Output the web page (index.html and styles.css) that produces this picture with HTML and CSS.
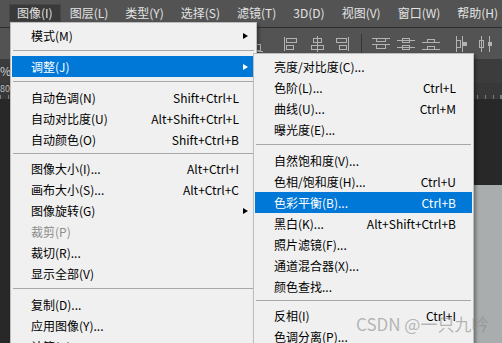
FILE: index.html
```html
<!DOCTYPE html>
<html>
    <head>
        <meta charset="utf-8" />
        <title>图像 - 调整</title>
        <link rel="stylesheet" href="styles.css">
    </head>
    <body>
        <div class="app">
            <ul class="menubar">
                <li class="mb-item active">图像(I)</li>
                <li class="mb-item">图层(L)</li>
                <li class="mb-item">类型(Y)</li>
                <li class="mb-item">选择(S)</li>
                <li class="mb-item">滤镜(T)</li>
                <li class="mb-item">3D(D)</li>
                <li class="mb-item">视图(V)</li>
                <li class="mb-item">窗口(W)</li>
                <li class="mb-item">帮助(H)</li>
            </ul>

            <!-- options bar: align / distribute buttons -->
            <div class="optbar">
                <svg class="ico" viewBox="0 0 16 16"><path d="M0 15.5H16"/><rect x="2.5" y="4.5" width="4" height="10"/><rect x="9.5" y="8.5" width="4" height="6"/></svg>
                <svg class="ico" viewBox="0 0 16 16"><path d="M1.5 1V15"/><rect x="3.5" y="2.5" width="10" height="4"/><rect x="3.5" y="9.5" width="7" height="4"/></svg>
                <svg class="ico" viewBox="0 0 16 16"><path d="M8.5 0V16"/><rect x="4.5" y="2.5" width="8" height="4"/><rect x="2.5" y="9.5" width="12" height="4"/></svg>
                <svg class="ico" viewBox="0 0 16 16"><path d="M14.5 1V15"/><rect x="2.5" y="2.5" width="10" height="4"/><rect x="5.5" y="9.5" width="7" height="4"/></svg>
                <span class="opt-sep"></span>
                <svg class="ico wide" viewBox="0 0 18 16"><path d="M0 2.5H18M0 8.5H18"/><rect x="4.5" y="2.5" width="9" height="3"/><rect x="4.5" y="8.5" width="9" height="4"/></svg>
                <svg class="ico wide" viewBox="0 0 18 16"><path d="M0 4.5H18M0 11.5H18"/><rect x="5.5" y="2.5" width="7" height="4"/><rect x="5.5" y="9.5" width="7" height="4"/></svg>
                <svg class="ico wide" viewBox="0 0 18 16"><path d="M0 6.5H18M0 13.5H18"/><rect x="5.5" y="3.5" width="7" height="3"/><rect x="5.5" y="10.5" width="7" height="3"/></svg>
                <svg class="ico" viewBox="0 0 16 16"><path d="M1.5 0V16M7.5 0V16"/><rect x="1.5" y="4.5" width="4" height="7"/><rect class="solid" x="8" y="6" width="4" height="4"/></svg>
                <svg class="ico" viewBox="0 0 16 16"><path d="M3.5 0V16M11.5 0V16"/><rect x="1.5" y="4.5" width="4" height="7"/><rect class="solid" x="10" y="6" width="4" height="4"/></svg>
            </div>
            <div class="tabbar"><span class="tab-name">%</span></div>
            <div class="ruler"><span class="ruler-num">80</span></div>
            <div class="canvas"><div class="doc"></div></div>

            <!-- 图像 menu -->
            <div class="menu menu-main">
                <div class="row"><span class="label">模式(M)</span><span class="more"><i class="arrow"></i></span></div>
                <div class="sep"></div>
                <div class="row hl"><span class="label">调整(J)</span><span class="more"><i class="arrow"></i></span></div>
                <div class="sep"></div>
                <div class="row"><span class="label">自动色调(N)</span><span class="key">Shift+Ctrl+L</span><span class="more"></span></div>
                <div class="row"><span class="label">自动对比度(U)</span><span class="key">Alt+Shift+Ctrl+L</span><span class="more"></span></div>
                <div class="row"><span class="label">自动颜色(O)</span><span class="key">Shift+Ctrl+B</span><span class="more"></span></div>
                <div class="sep sep-tight"></div>
                <div class="row"><span class="label">图像大小(I)...</span><span class="key">Alt+Ctrl+I</span><span class="more"></span></div>
                <div class="row"><span class="label">画布大小(S)...</span><span class="key">Alt+Ctrl+C</span><span class="more"></span></div>
                <div class="row"><span class="label">图像旋转(G)</span><span class="more"><i class="arrow"></i></span></div>
                <div class="row off"><span class="label">裁剪(P)</span><span class="more"></span></div>
                <div class="row"><span class="label">裁切(R)...</span><span class="more"></span></div>
                <div class="row"><span class="label">显示全部(V)</span><span class="more"></span></div>
                <div class="sep"></div>
                <div class="row"><span class="label">复制(D)...</span><span class="more"></span></div>
                <div class="row"><span class="label">应用图像(Y)...</span><span class="more"></span></div>
                <div class="row"><span class="label">计算(C)...</span><span class="more"></span></div>
            </div>

            <!-- 调整 submenu -->
            <div class="menu menu-sub">
                <div class="row"><span class="label">亮度/对比度(C)...</span><span class="more"></span></div>
                <div class="row"><span class="label">色阶(L)...</span><span class="key">Ctrl+L</span><span class="more"></span></div>
                <div class="row"><span class="label">曲线(U)...</span><span class="key">Ctrl+M</span><span class="more"></span></div>
                <div class="row"><span class="label">曝光度(E)...</span><span class="more"></span></div>
                <div class="sep"></div>
                <div class="row"><span class="label">自然饱和度(V)...</span><span class="more"></span></div>
                <div class="row"><span class="label">色相/饱和度(H)...</span><span class="key">Ctrl+U</span><span class="more"></span></div>
                <div class="row hl"><span class="label">色彩平衡(B)...</span><span class="key">Ctrl+B</span><span class="more"></span></div>
                <div class="row"><span class="label">黑白(K)...</span><span class="key">Alt+Shift+Ctrl+B</span><span class="more"></span></div>
                <div class="row"><span class="label">照片滤镜(F)...</span><span class="more"></span></div>
                <div class="row"><span class="label">通道混合器(X)...</span><span class="more"></span></div>
                <div class="row"><span class="label">颜色查找...</span><span class="more"></span></div>
                <div class="sep sep-tight"></div>
                <div class="row"><span class="label">反相(I)</span><span class="key">Ctrl+I</span><span class="more"></span></div>
                <div class="row"><span class="label">色调分离(P)...</span><span class="more"></span></div>
                <div class="row"><span class="label">阈值(T)...</span><span class="more"></span></div>
            </div>

            <div class="watermark">CSDN @一只九吟</div>
        </div>
    </body>
</html>
```

FILE: styles.css
```css
* {
	padding: 0;
	margin: 0;
	box-sizing: border-box;
}
body {
	font-family: "Noto Sans CJK SC", "Microsoft YaHei", sans-serif;
	font-size: 12px;
	background-color: #282828;
	overflow: hidden;
}
.app {
	position: relative;
	width: 502px;
	height: 343px;
	display: flex;
	flex-direction: column;
	overflow: hidden;
}

/* menu bar */
.menubar {
	list-style: none;
	flex: none;
	height: 28px;
	display: flex;
	align-items: center;
	padding: 0 0 1px 9px;
	background-color: #535353;
	border-bottom: 1px solid #2e2e2e;
	overflow: hidden;
}
.mb-item {
	flex: none;
	height: 18px;
	line-height: 18px;
	padding: 0 8px;
	margin-right: 1px;
	color: #e3e3e3;
	white-space: nowrap;
}
.mb-item.active {
	background-color: #3a3a3a;
	box-shadow: inset 0 0 0 1px #464646;
}

/* options bar */
.optbar {
	flex: none;
	height: 31px;
	display: flex;
	align-items: center;
	padding-left: 247px;
	background-color: #535353;
}
.ico {
	width: 16px;
	height: 16px;
	fill: none;
	stroke: #b3b3b3;
	stroke-width: 1;
	shape-rendering: crispEdges;
	flex: none;
}
.ico.wide {
	width: 18px;
}
.ico .solid {
	fill: #b3b3b3;
	stroke: none;
}
.ico:nth-child(2) {
	margin-left: 20px;
}
.ico:nth-child(3) {
	margin-left: 10px;
}
.ico:nth-child(4) {
	margin-left: 9px;
}
.opt-sep {
	width: 1px;
	height: 20px;
	margin: 0 10px 0 11px;
	background-color: #353535;
}
.ico.wide + .ico.wide {
	margin-left: 7px;
}
.ico.wide + .ico:not(.wide) {
	margin-left: 15px;
}
.ico:last-child {
	margin-left: 7px;
}

/* document tabs, ruler, canvas */
.tabbar {
	flex: none;
	height: 24px;
	line-height: 24px;
	background-color: #3c3c3c;
	color: #cfcfcf;
	font-size: 12px;
}
.ruler {
	flex: none;
	height: 17px;
	background-color: #383838;
	background-image: repeating-linear-gradient(to right, #7d7d7d 0 1px, transparent 1px 7.7px);
	background-size: 100% 4px;
	background-position: 0 100%;
	background-repeat: no-repeat;
	border-bottom: 1px solid #2a2a2a;
	color: #bdbdbd;
	font-size: 9px;
	line-height: 12px;
}
.canvas {
	flex: 1;
	background-color: #282828;
}
.doc {
	height: 100%;
	margin: 85px 0 0 300px;
	background-color: #a9adad;
}

/* menus */
.menu {
	position: absolute;
	background-color: #f0f0f0;
	border: 1px solid #bdbdbd;
	padding: 2px 1px;
	color: #000;
	box-shadow: 2px 2px 3px rgba(0, 0, 0, 0.35);
}
.menu-main {
	left: 10px;
	top: 22px;
	width: 247px;
}
.menu-sub {
	left: 253px;
	top: 53px;
	width: 221px;
}
.row {
	display: flex;
	align-items: center;
	height: 21px;
	padding: 0 6px 0 19px;
	white-space: nowrap;
}
.row .label {
	flex: 1;
}
.row .more {
	width: 10px;
	padding-left: 4px;
	display: flex;
	align-items: center;
}
.row.hl {
	background-color: #0078d7;
	color: #fff;
}
.row.off {
	color: #8d8d8d;
}
.arrow {
	width: 0;
	height: 0;
	border-style: solid;
	border-width: 3.5px 0 3.5px 5px;
	border-color: transparent transparent transparent #000;
}
.hl .arrow {
	border-left-color: #fff;
}
.sep {
	height: 1px;
	margin: 4px 1px 5px 1px;
	background-color: #a8a8a8;
}
.sep.sep-tight {
	margin: 3px 1px 4px 1px;
}

.watermark {
	position: absolute;
	left: 356px;
	top: 313px;
	font-size: 17px;
	line-height: 22px;
	color: rgba(140, 140, 140, 0.6);
	white-space: nowrap;
}
```
